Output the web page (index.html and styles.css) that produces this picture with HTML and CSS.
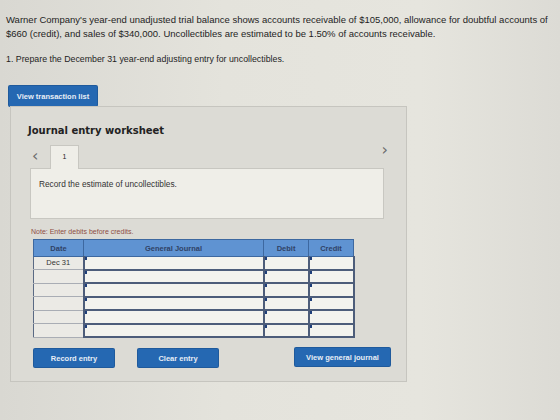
FILE: index.html
```html
<!DOCTYPE html>
<html lang="en">
<head>
    <meta charset="UTF-8">
    <title>Journal entry worksheet</title>
    <link rel="stylesheet" href="styles.css">
</head>
<body>
    <div class="page">
        <p class="intro">Warner Company's year-end unadjusted trial balance shows accounts receivable of $105,000, allowance for doubtful accounts of $660 (credit), and sales of $340,000. Uncollectibles are estimated to be 1.50% of accounts receivable.</p>
        <p class="task">1. Prepare the December 31 year-end adjusting entry for uncollectibles.</p>

        <button class="btn btn-list">View transaction list</button>

        <div class="worksheet">
            <h2>Journal entry worksheet</h2>

            <!-- step tabs -->
            <div class="tabs">
                <span class="arrow">&lsaquo;</span>
                <span class="tab">1</span>
                <span class="arrow arrow-next">&rsaquo;</span>
            </div>
            <div class="instruction">Record the estimate of uncollectibles.</div>

            <p class="note">Note: Enter debits before credits.</p>

            <table class="journal">
                <thead>
                    <tr>
                        <th class="col-date">Date</th>
                        <th class="col-account">General Journal</th>
                        <th class="col-amount">Debit</th>
                        <th class="col-amount">Credit</th>
                    </tr>
                </thead>
                <tbody>
                    <tr><td class="date">Dec 31</td><td class="input"></td><td class="input"></td><td class="input"></td></tr>
                    <tr><td class="date"></td><td class="input"></td><td class="input"></td><td class="input"></td></tr>
                    <tr><td class="date"></td><td class="input"></td><td class="input"></td><td class="input"></td></tr>
                    <tr><td class="date"></td><td class="input"></td><td class="input"></td><td class="input"></td></tr>
                    <tr><td class="date"></td><td class="input"></td><td class="input"></td><td class="input"></td></tr>
                    <tr><td class="date"></td><td class="input"></td><td class="input"></td><td class="input"></td></tr>
                </tbody>
            </table>

            <div class="actions">
                <button class="btn btn-record">Record entry</button>
                <button class="btn btn-clear">Clear entry</button>
                <button class="btn btn-journal">View general journal</button>
            </div>
        </div>
    </div>
</body>
</html>
```

FILE: styles.css
```css
html, body {
    margin: 0;
    height: 100%;
}

body {
    background: linear-gradient(90deg, #d9d8d2 0%, #e4e3dc 40%, #e6e5de 75%, #dcdbd5 100%);
    font-family: "Liberation Sans", Arial, sans-serif;
    color: #1e1e1e;
    overflow: hidden;
}

.page {
    padding: 13px 6px 0;
}

.intro {
    margin: 0;
    font-size: 9.5px;
    line-height: 14px;
    max-width: 550px;
}

.task {
    margin: 11px 0 0;
    font-size: 8.8px;
    line-height: 14px;
}

.btn {
    display: block;
    border: 0;
    border-radius: 1px;
    background: #2568b2;
    color: #e8eef6;
    font-family: "Liberation Sans", Arial, sans-serif;
    font-weight: bold;
    font-size: 7.5px;
    padding: 0;
    box-shadow: 0 0 0 1px #1f5a9c;
}

.btn-list {
    margin: 20px 0 0 3px;
    width: 88px;
    height: 20px;
}

.worksheet {
    margin-left: 4px;
    width: 397px;
    height: 276px;
    box-sizing: border-box;
    border: 1px solid #c6c5bf;
    background: #dcdbd5;
    padding: 17px 0 0 19px;
}

.worksheet h2 {
    margin: 0 0 0 -2px;
    font-family: "DejaVu Sans", Verdana, sans-serif;
    font-size: 10px;
    font-weight: bold;
    color: #222;
    line-height: 14px;
}

.tabs {
    display: flex;
    align-items: flex-end;
    width: 358px;
    height: 24px;
    margin-top: 6px;
}

.arrow {
    font-family: "DejaVu Sans", sans-serif;
    font-size: 16px;
    color: #6d6d6d;
    line-height: 14px;
    width: 18px;
    padding-left: 2px;
    align-self: center;
}

.arrow-next {
    margin-left: auto;
    text-align: right;
    width: auto;
    padding: 0;
    align-self: flex-start;
    margin-top: -1px;
}

.tab {
    width: 29px;
    height: 24px;
    box-sizing: border-box;
    border: 1px solid #c8c7c1;
    border-bottom: 0;
    background: #efeee8;
    font-size: 7px;
    text-align: center;
    line-height: 21px;
    position: relative;
    z-index: 1;
    margin-bottom: -1px;
}

.instruction {
    width: 354px;
    height: 51px;
    box-sizing: border-box;
    border: 1px solid #c8c7c1;
    background: #efeee8;
    padding: 10px 0 0 8px;
    font-size: 8.3px;
    color: #333;
}

.note {
    margin: 8px 0 0 1px;
    font-size: 7px;
    color: #8e4e44;
    line-height: 9px;
}

.journal {
    margin: 3px 0 0 3px;
    width: 318px;
    border-collapse: collapse;
    table-layout: fixed;
    border: 1px solid #4f6684;
}

.journal th {
    background: #5f93d2;
    color: #2f4266;
    font-size: 7.5px;
    font-weight: bold;
    height: 16px;
    padding: 0;
    border: 1px solid #3d68a0;
    vertical-align: middle;
}

.col-date { width: 49px; }
.col-account { width: 179px; }
.col-amount { width: 44px; }

.journal td {
    height: 11.5px;
    padding: 0;
    border: 1px solid #5a6a84;
}

.journal td.date {
    background: #ebeae5;
    border-color: #a9adb4;
    border-left-color: #5a6a84;
    font-size: 7.5px;
    text-align: center;
    color: #333;
    vertical-align: top;
    line-height: 12px;
}

.journal td.input {
    background: #f3f3ee;
    border: 2px solid #4d5d7a;
    border-top-width: 1px;
    position: relative;
}

/* little caret mark in the corner of each input */
.journal td.input::before {
    content: "";
    position: absolute;
    left: 0;
    top: 0;
    width: 2px;
    height: 3px;
    background: #1f3f7a;
}

.actions {
    display: flex;
    align-items: flex-start;
    width: 356px;
    margin: 11px 0 0 4px;
}

.btn-record,
.btn-clear {
    width: 80px;
    height: 18px;
}

.btn-clear {
    margin-left: 24px;
}

.btn-journal {
    margin-left: auto;
    width: 95px;
    height: 18px;
    margin-top: -1px;
}
```
